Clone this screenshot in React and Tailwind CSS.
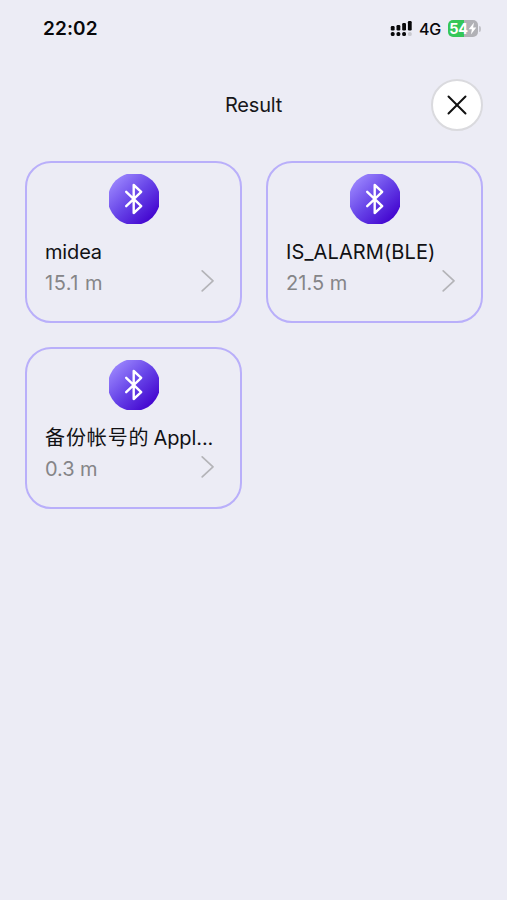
import { X } from "lucide-react";

const devices = [
  { id: 1, name: "midea", distance: "15.1 m", tracking: "tracking-[-0.15px]", distanceTracking: "tracking-[0.5px]" },
  { id: 2, name: "IS_ALARM(BLE)", distance: "21.5 m", tracking: "tracking-[0.1px]", distanceTracking: "tracking-[0.05px]" },
  { id: 3, prefix: "备份帐号的", name: "Appl...", distance: "0.3 m", tracking: "tracking-[-0.1px]", distanceTracking: "tracking-[-0.1px]" },
];

const SignalIcon = () => (
  <svg width="22" height="18" viewBox="0 0 22 18" fill="#08080a">
    <rect x="0.8" y="6" width="3.8" height="4.5" rx="1.2" />
    <rect x="6.5" y="5" width="3.8" height="5.5" rx="1.2" />
    <rect x="12.2" y="3" width="3.8" height="7.5" rx="1.2" />
    <rect x="17.9" y="1" width="3.8" height="9.5" rx="1.2" />
    <rect x="0.8" y="12" width="3.8" height="4" rx="1.6" />
    <rect x="6.5" y="12" width="3.8" height="4" rx="1.6" />
    <rect x="12.2" y="12" width="3.8" height="4" rx="1.6" />
    <rect x="17.9" y="12" width="3.8" height="4" rx="1.6" fill="#c9c9cf" />
  </svg>
);

const Battery = () => (
  <div className="flex items-center">
    <div className="flex h-[17px] w-[30px] items-center justify-center rounded-[5px] bg-[linear-gradient(90deg,#34c759_54%,#b1b1b6_54%)] text-[14.5px] font-bold leading-none tracking-[-0.4px] text-white">
      <span className="pt-px">54</span>
      <svg width="9" height="13" viewBox="0 0 9 13" fill="#fff">
        <path d="M6 .5.7 7.2h3.2L2.9 12.5 8.3 5.6H5.1Z" />
      </svg>
    </div>
    <div className="ml-px h-[6px] w-[2px] rounded-r-full bg-[#c4c4ca]" />
  </div>
);

const StatusBar = () => (
  <div className="flex h-[57px] items-center justify-between pl-[43px] pr-[26px] text-[#08080a]">
    <span className="pt-[2px] text-[19px] font-semibold tracking-[0.1px]">22:02</span>
    <div className="flex items-center">
      <SignalIcon />
      <span className="ml-[7px] mr-[7px] text-[16px] font-medium tracking-[-0.2px]">4G</span>
      <Battery />
    </div>
  </div>
);

// The badge is slightly flattened on each side, where the disc meets its box
const BluetoothBadge = () => (
  <svg width="50" height="50" viewBox="0 0 50 50" fill="none">
    <defs>
      <linearGradient id="badge" x1="5" y1="5" x2="43" y2="45" gradientUnits="userSpaceOnUse">
        <stop offset="0" stopColor="#9b86fd" />
        <stop offset="0.5" stopColor="#6744e8" />
        <stop offset="1" stopColor="#4305cf" />
      </linearGradient>
    </defs>
    <circle cx="25" cy="25" r="26" fill="url(#badge)" />
    <path
      d="M17.2 17.8 32.2 32.2 24.7 39V11L32.2 17.8 17.2 32.2"
      stroke="#fff"
      strokeWidth="2.4"
      strokeLinecap="round"
      strokeLinejoin="round"
    />
  </svg>
);

const DeviceCard = ({ device }) => (
  <button className="flex h-[162px] min-w-0 flex-col rounded-[26px] border-2 border-[#b9affa] pl-[18px] pr-[25px] pt-[11px] text-left">
    <div className="-mr-[8px] flex justify-center self-stretch">
      <BluetoothBadge />
    </div>
    <div className={`-mr-[6px] mt-[13px] flex self-stretch whitespace-nowrap text-[20px] leading-[31px] text-[#111114] ${device.tracking}`}>
      {device.prefix && <span className="mr-[4px] tracking-[0.9px]">{device.prefix}</span>}
      <span>{device.name}</span>
    </div>
    <div className="flex items-center justify-between self-stretch">
      <span className={`text-[20px] leading-[31px] text-[#858588] ${device.distanceTracking}`}>
        {device.distance}
      </span>
      <svg className="-mt-[5px]" width="14" height="24" viewBox="0 0 14 24" fill="none">
        <path d="M1.2 1.8 12 11.8 1.2 21.8" stroke="#b4b4b8" strokeWidth="1.7" strokeLinecap="round" strokeLinejoin="round" />
      </svg>
    </div>
  </button>
);

const App = () => {
  return (
    <div className="min-h-screen bg-[#ececf5] font-['Inter','Noto_Sans_CJK_SC',sans-serif]">
      <StatusBar />
      <header className="grid h-[96px] grid-cols-[1fr_auto_1fr] items-center px-[24px]">
        <h1 className="col-start-2 text-[20px] tracking-[-0.2px] text-[#17171a]">Result</h1>
        <button className="flex size-[52px] items-center justify-center justify-self-end rounded-full border-2 border-[#dadade] bg-white">
          <X size={34} strokeWidth={1.4} color="#111" />
        </button>
      </header>
      <main className="grid grid-cols-2 gap-6 pl-[25px] pr-[24px] pt-[8px]">
        {devices.map((device) => (
          <DeviceCard key={device.id} device={device} />
        ))}
      </main>
    </div>
  );
};

export default App;
